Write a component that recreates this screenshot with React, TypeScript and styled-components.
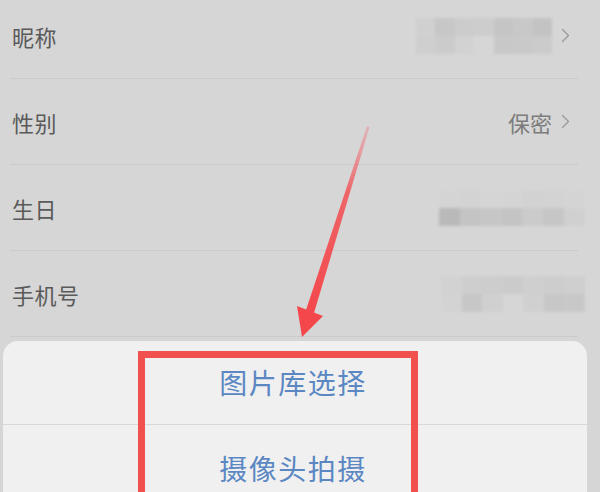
import React from 'react';
import styled, { createGlobalStyle } from 'styled-components';

const GlobalStyle = createGlobalStyle`
  html, body {
    margin: 0;
    padding: 0;
    background: #d6d6d6;
  }
  body {
    font-family: "Noto Sans CJK SC", "Noto Sans", sans-serif;
  }
`;

interface Field {
  label: string;
  value?: string;
  chevron: boolean;
  mosaic?: string[][];
  mosaicWidth?: number;
}

const fields: Field[] = [
  {
    label: '昵称',
    chevron: true,
    mosaicWidth: 136,
    mosaic: [
      ['#d0d0d0', '#c7c7c7', '#cccccc', '#cdcdcd', '#c5c5c5', '#c8c8c8', '#c3c3c3'],
      ['#cfcfcf', '#cbcbcb', '#d2d2d2', '#d6d6d6', '#c8c8c8', '#c9c9c9', '#cbcbcb'],
    ],
  },
  { label: '性别', value: '保密', chevron: true },
  {
    label: '生日',
    chevron: false,
    mosaicWidth: 146,
    mosaic: [
      ['#d4d4d4', '#d3d3d3', '#d5d5d5', '#d4d4d4', '#d2d2d2', '#d3d3d3', '#d4d4d4'],
      ['#b9b9b9', '#c4c4c4', '#c6c6c6', '#c4c4c4', '#cbcbcb', '#c6c6c6', '#d0d0d0'],
    ],
  },
  {
    label: '手机号',
    chevron: false,
    mosaicWidth: 144,
    mosaic: [
      ['#d2d2d2', '#cecece', '#cdcdcd', '#cbcbcb', '#cfcfcf', '#cdcdcd', '#cfcfcf'],
      ['#d3d3d3', '#c7c7c7', '#d0d0d0', '#d6d6d6', '#d0d0d0', '#c7c7c7', '#c8c8c8'],
    ],
  },
];

const options = ['图片库选择', '摄像头拍摄'];

const App: React.FC = () => {
  return (
    <>
      <GlobalStyle />
      <Screen>
        <FieldList>
          {fields.map((f) => (
            <FieldRow key={f.label}>
              <FieldLabel>{f.label}</FieldLabel>
              <FieldValue $chevron={f.chevron}>
                {f.value && <ValueText>{f.value}</ValueText>}
                {f.mosaic && (
                  <Mosaic style={{ width: f.mosaicWidth }}>
                    {f.mosaic.flat().map((c, i) => (
                      <MosaicCell key={i} $shade={c} />
                    ))}
                  </Mosaic>
                )}
                {f.chevron && (
                  <Chevron width="9" height="15" viewBox="0 0 9 15">
                    <polyline points="1.5,1.5 7.5,7.5 1.5,13.5" />
                  </Chevron>
                )}
              </FieldValue>
            </FieldRow>
          ))}
        </FieldList>

        <Sheet>
          {options.map((o) => (
            <SheetOption key={o}>{o}</SheetOption>
          ))}
        </Sheet>

        <Highlight />

        <ArrowOverlay width="600" height="492" viewBox="0 0 600 492">
          <defs>
            <linearGradient id="shaft" x1="368" y1="125" x2="305" y2="315" gradientUnits="userSpaceOnUse">
              <stop offset="0" stopColor="#f07a80" stopOpacity="0.35" />
              <stop offset="0.35" stopColor="#f0585c" stopOpacity="0.9" />
              <stop offset="1" stopColor="#f4474b" />
            </linearGradient>
          </defs>
          <polygon points="367,126 369.5,127 314,313 306,310" fill="url(#shaft)" />
          <polygon points="297,306 323,316 302,337" fill="#f4474b" />
        </ArrowOverlay>
      </Screen>
    </>
  );
};

const Screen = styled.div`
  position: relative;
  width: 600px;
  height: 492px;
  overflow: hidden;
  background: #d6d6d6;
`;

const FieldList = styled.div`
  display: flex;
  flex-direction: column;
  margin-top: -7px;
  padding: 0 22px 0 10px;
`;

const FieldRow = styled.div`
  height: 85px;
  display: flex;
  align-items: center;
  justify-content: space-between;
  border-bottom: 1px solid #cbcbcb;
  padding: 0 0 0 2px;
  box-sizing: content-box;
`;

const FieldLabel = styled.span`
  font-size: 22px;
  color: #5a5a5a;
  letter-spacing: 0.5px;
`;

const FieldValue = styled.div<{ $chevron: boolean }>`
  display: flex;
  align-items: center;
  gap: 9px;
  margin-right: ${({ $chevron }) => ($chevron ? '8px' : '-7px')};
`;

const ValueText = styled.span`
  font-size: 22px;
  color: #7c7c7c;
`;

const Mosaic = styled.div`
  height: 36px;
  display: grid;
  grid-template-columns: repeat(7, 1fr);
  grid-template-rows: 1fr 1fr;
  filter: blur(1.5px);
`;

const MosaicCell = styled.div<{ $shade: string }>`
  background: ${({ $shade }) => $shade};
`;

const Chevron = styled.svg`
  fill: none;
  stroke: #9a9a9a;
  stroke-width: 1.4;
  stroke-linecap: round;
  stroke-linejoin: round;
`;

const Sheet = styled.div`
  position: absolute;
  left: 3px;
  top: 341px;
  width: 584px;
  height: 170px;
  background: #f0f0f1;
  border-radius: 15px 15px 0 0;
  display: flex;
  flex-direction: column;
`;

const SheetOption = styled.div`
  height: 84px;
  display: flex;
  align-items: center;
  justify-content: center;
  font-size: 28px;
  color: #5b87c2;
  letter-spacing: 1.5px;
  padding-right: 4px;

  & + & {
    border-top: 1px solid #d8d8da;
    height: 88px;
  }
`;

const Highlight = styled.div`
  position: absolute;
  left: 138px;
  top: 351px;
  width: 280px;
  height: 200px;
  box-sizing: border-box;
  border: 7px solid #f2504f;
`;

const ArrowOverlay = styled.svg`
  position: absolute;
  left: 0;
  top: 0;
  pointer-events: none;
`;

export default App;
